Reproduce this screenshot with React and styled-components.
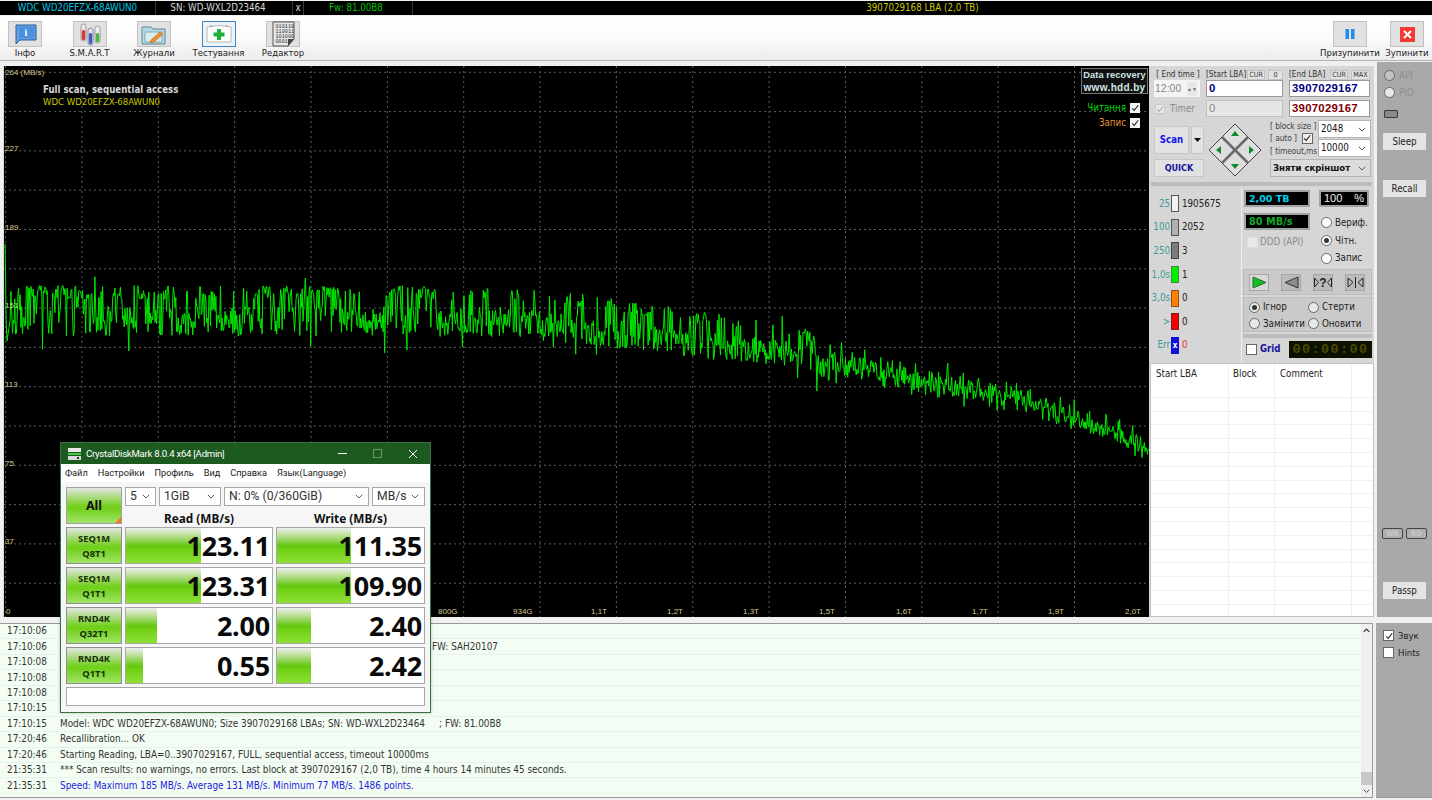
import React from 'react';
import styled, { createGlobalStyle } from 'styled-components';

const SANS = '"DejaVu Sans Condensed", "Liberation Sans", Arial, sans-serif';
const SEGOE = 'Roboto, "Open Sans", sans-serif';
const NOTO = '"Noto Sans", "Open Sans", sans-serif';

const Global = createGlobalStyle`
  html, body { margin: 0; padding: 0; background: #f0f0f0; }
  * { box-sizing: border-box; }
`;

/* ---------- chart data ---------- */
function mulberry(a) {
  return () => {
    a |= 0; a = (a + 0x6d2b79f5) | 0;
    let t = Math.imul(a ^ (a >>> 15), 1 | a);
    t = (t + Math.imul(t ^ (t >>> 7), 61 | t)) ^ t;
    return ((t ^ (t >>> 14)) >>> 0) / 4294967296;
  };
}
const lerp = (pts, x) => {
  for (let i = 1; i < pts.length; i++) {
    if (x <= pts[i][0]) {
      const [x0, y0] = pts[i - 1];
      const [x1, y1] = pts[i];
      return y0 + ((y1 - y0) * (x - x0)) / (x1 - x0);
    }
  }
  return pts[pts.length - 1][1];
};
const CENTER = [[0, 311], [500, 312], [600, 322], [700, 337], [800, 347], [825, 364], [900, 375], [1000, 396], [1100, 428], [1148, 452]];
const AMP = [[0, 26], [560, 26], [700, 25], [815, 20], [840, 15], [1148, 11]];

function buildCurve() {
  const r = mulberry(20107);
  const pts = ['1,178', '1.5,205', '2,250', '3,275', '4,268', '5,262'];
  let p = 0.3;
  let left = 0;
  for (let i = 8; i < 1486; i++) {
    const x = i * 0.7705;
    const c = lerp(CENTER, x);
    const a = lerp(AMP, x);
    if (left-- <= 0) { p = r() < 0.4 ? 0.55 + r() * 0.2 : 0.06 + r() * 0.2; left = 5 + Math.floor(r() * 20); }
    let y;
    if (x < 820) {
      y = r() < p ? c - a * (0.45 + 0.55 * r()) : c + a * (r() * 1.15 - 0.2);
      if (r() < 0.004) y = c - a - 3 - r() * 7;
      if (r() < 0.006) y = c + a + 4 + r() * 12;
    } else {
      y = c + a * (r() + r() - 1) * 1.25;
      if (r() < 0.03) y = c - a - r() * 8;
      if (r() < 0.02) y = c + a + r() * 6;
    }
    pts.push(`${x.toFixed(2)},${(y - 66).toFixed(1)}`);
  }
  return pts.join(' ');
}
const CURVE = buildCurve();

const H_LINES = Array.from({ length: 14 }, (_, i) => 6.3 + i * 39.3);
const V_LINES = Array.from({ length: 15 }, (_, i) => 1.6 + i * 76.35);
const Y_LABELS = [['227', 84], ['189', 163], ['151', 241], ['113', 320], ['75', 399], ['37', 477]];
const X_LABELS = [['0', 2], ['800G', 434], ['934G', 509], ['1,1T', 587], ['1,2T', 663], ['1,3T', 739], ['1,5T', 815], ['1,6T', 892], ['1,7T', 968], ['1,9T', 1044], ['2,0T', 1121]];

/* ---------- page ---------- */
const Root = styled.div`
  position: relative; width: 1432px; height: 800px; overflow: hidden;
  display: flex; flex-direction: column; background: #f0f0f0;
  font: 9.7px ${SANS}; color: #222;
`;
const TopBar = styled.div`
  margin-top: 1px; height: 14px; background: #000; display: flex; flex: none;
  font: 9.7px/14px ${SANS};
`;
const TopCell = styled.div`
  width: ${p => p.$w ? `${p.$w}px` : 'auto'}; flex: ${p => p.$w ? 'none' : 1};
  padding-right: ${p => p.$pr || 0}px;
  color: ${p => p.$c}; text-align: center; white-space: nowrap;
  border-right: ${p => p.$w ? '1px solid #3c3c3c' : 'none'};
`;
const Toolbar = styled.div`
  margin-top: 1px; height: 45px; flex: none; display: flex; justify-content: space-between;
  padding: 5px 8px 0 8px; background: linear-gradient(#fff, #fbfbfb 50%, #ececec);
  border-bottom: 1px solid #b4b4b4;
`;
const ToolGroup = styled.div`display: flex; gap: ${p => p.$gap}px;`;
const ToolItem = styled.div`
  width: 34px; display: flex; flex-direction: column; align-items: center;
`;
const ToolBtn = styled.div`
  width: 34px; height: 26px; display: flex; align-items: center; justify-content: center;
  background: ${p => p.$active ? '#eef3f8' : '#e1e1e1'};
  border: 1px solid ${p => p.$active ? '#3f86c4' : '#c2c2c2'};
`;
const ToolLabel = styled.div`
  margin-top: -1px; font: 9.5px/13px ${SANS}; white-space: nowrap; color: #222;
`;

const Main = styled.div`
  height: 556px; flex: none; margin-top: 1px; display: flex; padding-left: 3px;
`;
const Chart = styled.div`
  position: relative; width: 1146px; height: 551px; margin-top: 4px; background: #000;
  border-left: 1px solid #d8d8d8; flex: none;
`;
const ChartSvg = styled.svg`display: block;`;
const ChartTitle = styled.div`
  position: absolute; left: 39px; top: 17px; color: #d8d8d8; font: bold 9.6px/13px ${SANS};
  white-space: nowrap;
`;
const ChartSub = styled.div`
  position: absolute; left: 39px; top: 30px; color: #c8c800; font: 9.5px/12px ${SANS};
  white-space: nowrap;
`;
const Brand = styled.div`
  position: absolute; right: 1px; top: 2px; width: 67px; height: 26px; background: #111;
  border: 1px solid #777; color: #cfe6e6; font: bold 9.2px/11.5px "Liberation Sans", sans-serif;
  letter-spacing: .15px; text-align: center; padding-top: 1px; white-space: nowrap;
`;
const BrandUrl = styled.div`font-size: 10px; letter-spacing: .35px;`;
const Legend = styled.div`
  position: absolute; right: 9px; top: ${p => p.$top}px; display: flex; align-items: center; gap: 4px;
  color: ${p => p.$c}; font: 9.7px/12px ${SANS};
`;
const LegendBox = styled.span`
  width: 10px; height: 10px; background: #f4f4f4; display: flex; align-items: center; justify-content: center;
`;

const RightPanel = styled.div`
  width: 225px; height: 551px; margin-top: 4px; flex: none; display: flex; flex-direction: column;
  background: #d6d6d6;
`;
const TopSection = styled.div`
  height: 116px; flex: none; padding: 3px 3px 0 5px; color: #333;
`;
const HeadRow = styled.div`
  display: grid; grid-template-columns: 46px 77px 81px; column-gap: 6px;
`;
const FieldGrid = styled(HeadRow)`row-gap: 3px; grid-auto-rows: 17px;`;
const HeadCell = styled.div`
  height: 11px; display: flex; align-items: center; justify-content: space-between;
  white-space: nowrap; font: 8.2px/11px ${SANS}; color: #333;
`;
const TinyBtn = styled.span`
  height: 10px; min-width: ${p => p.$w}px; padding: 0 1px; display: inline-flex; align-items: center; justify-content: center;
  background: #e3e3e3; border: 1px solid #c4c4c4; font: 7.2px/8px ${SANS}; color: #333;
`;
const HeadBtns = styled.span`display: inline-flex; gap: 3px;`;
const LbaField = styled.div`
  height: 17px; padding-left: 2px; border: 1px solid ${p => p.$off ? '#c0c0c0' : '#9a9a9a'};
  background: ${p => p.$off ? '#e6e6e6' : '#fff'};
  color: ${p => p.$c}; font: ${p => p.$off ? 'normal' : 'bold'} 11.4px/15px "Liberation Sans", sans-serif;
  letter-spacing: .25px;
`;
const TimeField = styled.div`
  height: 17px; background: #f4f4f4; display: flex; align-items: center; justify-content: space-between;
  padding: 0 3px 0 1px; color: #888; font: 10.5px/15px "Liberation Sans", sans-serif;
`;
const Spin = styled.span`
  width: 10px; height: 14px; background: #e8e8e8; display: flex; flex-direction: column; align-items: center;
  justify-content: center; color: #666; font-size: 5px; line-height: 6px;
`;
const TimerCell = styled.div`
  height: 17px; display: flex; align-items: center; gap: 5px; padding-left: 1px; color: #8a8a8a; font: 9.7px/12px ${SANS};
`;
const LowerRow = styled.div`display: flex; margin-top: 3px;`;
const ScanCol = styled.div`width: 50px; flex: none; display: flex; flex-direction: column; gap: 5px; margin-top: 6px;`;
const ScanRow = styled.div`display: flex; gap: 2px; height: 28px;`;
const ScanBtn = styled.div`
  flex: 1; background: #e2e2e2; border: 1px solid #c6c6c6; color: #1414f0;
  font: bold 9.6px/26px ${SANS}; text-align: center;
`;
const ScanDrop = styled.div`
  width: 13px; flex: none; background: #e2e2e2; border: 1px solid #c6c6c6; display: flex; align-items: center; justify-content: center;
`;
const QuickBtn = styled.div`
  height: 18px; background: #e2e2e2; border: 1px solid #c6c6c6; color: #14149c;
  font: bold 9px/16px ${SANS}; text-align: center;
`;
const Pad = styled.div`width: 54px; flex: none; margin: 3px 0 0 4px;`;
const ScanOptions = styled.div`
  flex: none; width: 101px; margin-left: 8px; display: grid; grid-template-columns: 48px 53px; grid-template-rows: 18px 18px 18px; row-gap: 1px;
`;
const OptLabels = styled.div`
  grid-row: 1 / span 2; display: flex; flex-direction: column; font: 8.4px/10px ${SANS}; color: #444; white-space: nowrap; letter-spacing: -.1px;
`;
const OptLabel = styled.div`display: flex; align-items: center; gap: 5px; height: ${p => p.$h}px;`;
const MiniCombo = styled.div`
  grid-column: ${p => p.$col || 2}; grid-row: ${p => p.$row}; height: 18px; margin-top: ${p => p.$mt || 0}px; background: ${p => p.$bg || '#fff'}; border: 1px solid #b4b4b4;
  display: flex; align-items: center; justify-content: space-between; padding: 0 4px 0 2px;
  font: ${p => p.$bold ? 'bold' : 'normal'} ${p => p.$fs || 9.7}px/16px ${SANS}; color: #111; white-space: nowrap;
`;

const Divider = styled.div`height: 4px; flex: none; margin: 0 2px 1px; background: #bcbcbc;`;
const MidSection = styled.div`height: 175px; flex: none; display: flex;`;
const Stats = styled.div`
  width: 93px; flex: none; padding-top: 5px; border-right: 1px solid #ececec; display: flex; flex-direction: column;
`;
const StatRow = styled.div`height: 23.6px; display: flex; align-items: center;`;
const StatLabel = styled.div`
  width: 21px; text-align: right; color: ${p => p.$c || '#3f9a9a'}; font: 9.7px/12px ${SANS}; white-space: nowrap; flex: none;
`;
const Swatch = styled.div`
  width: 8px; height: 17px; margin-left: 1px; flex: none; background: ${p => p.$c}; border: 1px solid ${p => p.$b};
  color: #fff; font: bold 8px/15px ${SANS}; text-align: center;
`;
const StatVal = styled.div`
  margin-left: 3px; font: 9.7px/12px ${SANS}; color: ${p => p.$c || '#222'};
`;
const Controls = styled.div`flex: 1; display: flex; flex-direction: column; padding: 0 2px 0 1px;`;
const ReadoutArea = styled.div`
  height: 81px; flex: none; display: grid; grid-template-columns: 75px 1fr; padding: 3px 0 0 1px;
`;
const ReadoutCol = styled.div`display: flex; flex-direction: column; gap: 6px;`;
const Lcd = styled.div`
  width: ${p => p.$w}px; height: 17px; background: #000; border: 2px solid #a2a2a2; color: ${p => p.$c};
  font: bold ${p => p.$fs || 9.5}px/13px "DejaVu Sans", sans-serif; padding-left: 3px; white-space: nowrap;
`;
const PctLcd = styled(Lcd)`
  display: flex; justify-content: space-between; padding: 0 3px; font: 11px/13px "Liberation Sans", sans-serif;
`;
const DddRow = styled.div`
  display: flex; align-items: center; gap: 2px; padding-left: 3px; color: #8a8a8a; font: 9.7px/12px ${SANS};
`;
const ModeCol = styled.div`display: flex; flex-direction: column;`;
const RadioRow = styled.div`
  display: flex; align-items: center; gap: ${p => p.$g || 3}px; height: ${p => p.$h || 17.7}px; padding-left: ${p => p.$pl || 0}px;
  font: 9.7px/12px ${SANS}; color: #222; white-space: nowrap;
`;
const RadioMark = styled.span`
  width: 11px; height: 11px; border-radius: 50%; background: ${p => p.$bg || '#fff'}; border: 1px solid #666; flex: none;
  display: flex; align-items: center; justify-content: center;
  &::after { content: ''; width: 5px; height: 5px; border-radius: 50%; background: ${p => p.$on ? '#333' : 'transparent'}; }
`;
const ModeSpacer = styled.div`height: 7px; flex: none;`;
const Tick = styled.span`
  width: ${p => p.$s || 10}px; height: ${p => p.$s || 10}px; flex: none; background: ${p => p.$bg || '#fff'};
  border: 1px solid ${p => p.$b || '#666'}; display: flex; align-items: center; justify-content: center;
`;
const PlayBox = styled.div`
  height: 26px; flex: none; margin-top: 1px; background: #cacaca; border: 1px solid #bcbcbc;
  display: flex; align-items: center; justify-content: space-between; padding: 0 6px 0 5px;
`;
const PlayBtn = styled.div`
  width: 20px; height: 17px; background: ${p => p.$on ? '#d8d8d8' : '#bcbcbc'}; border: 1px solid #a6a6a6;
  display: flex; align-items: center; justify-content: center;
`;
const ErrBox = styled.div`
  height: 35px; flex: none; margin-top: 2px; padding: 1px 0 0 5px; background: #cacaca; border: 1px solid #bcbcbc;
  display: grid; grid-template-columns: 59px 1fr;
`;
const Strip = styled.div`height: 4px; flex: none; margin-top: 2px; background: #bcbcbc;`;
const GridRow = styled.div`display: flex; align-items: center; height: 22px; padding-left: 3px;`;
const GridLabel = styled.span`margin-left: 3px; color: #14149c; font: bold 9.6px/12px ${SANS};`;
const TimerLcd = styled.div`
  margin-left: auto; width: 83px; height: 17px; background: #0d1200; color: #4a4a00;
  font: bold 13.5px/17px "Liberation Mono", monospace; letter-spacing: 1.4px; text-align: center;
`;

const TableBox = styled.div`
  margin: 1px 0 0 1px; width: 224px; flex: 1; background: #fff; border: 1px solid #c2c2c2; overflow: hidden;
`;
const TableHead = styled.div`display: flex; height: 20px; align-items: center; color: #222; font: 9.7px/12px ${SANS};`;
const TableRow = styled.div`display: flex; height: 13.8px; border-bottom: 1px solid #f0f0f0;`;
const TCol = styled.div`
  width: ${p => p.$w}px; height: 100%; padding-left: ${p => p.$pl || 0}px; flex: none; border-right: 1px solid #f0f0f0; white-space: nowrap;
  display: flex; align-items: center;
`;

const FarPanel = styled.div`
  width: 56px; height: 555px; margin-left: 3px; flex: none; background: #a9a9a9; display: flex; flex-direction: column;
  padding-top: 5px; align-items: flex-start;
`;
const FarRadio = styled.div`
  display: flex; align-items: center; gap: 4px; height: 17px; padding-left: 7px; color: #8e8e8e; font: 9.7px/12px ${SANS};
`;
const Led = styled.div`
  width: 14px; height: 8px; margin: 9px 0 0 7px; background: #8a8a8a; border: 1px solid #3a3a3a; border-radius: 1px;
`;
const FarBtn = styled.div`
  width: 43px; height: 17px; margin: ${p => p.$mt}px 0 0 6px; background: #e4e4e4; text-align: center;
  font: 9.7px/17px ${SANS}; color: #222;
`;
const WrRow = styled.div`display: flex; gap: 3px; margin: 331px 0 0 5px;`;
const WrBtn = styled.div`
  width: 21px; height: 11px; border: 1px solid #444; border-radius: 2px; background: #b0b0b0; color: #c8c8c8; text-align: center;
  font: bold 7.5px/9px ${SANS};
`;

const Bottom = styled.div`height: 175px; margin-top: 5px; flex: none; display: flex;`;
const LogBox = styled.div`
  width: 1373px; flex: none; position: relative; display: flex; border-top: 1px solid #9a9a9a; border-bottom: 1px solid #9a9a9a; border-right: 1px solid #9a9a9a;
  background: #f3fdf3;
`;
const LogList = styled.div`flex: 1; display: flex; flex-direction: column;`;
const LogRow = styled.div`
  height: 15.45px; flex: none; display: flex; align-items: center; white-space: pre; border-bottom: 1px solid #e8f3e8;
  color: ${p => p.$c || '#333'}; font: 9.9px/14px ${SANS};
`;
const LogTime = styled.span`width: 60px; flex: none; padding-left: 7px; color: #333; font-size: 9.9px;`;
const LogGap = styled.span`display: inline-block; width: ${p => p.$w}px;`;
const ScrollBar = styled.div`
  width: 11px; flex: none; background: #efefef; display: flex; flex-direction: column; align-items: center; justify-content: space-between;
`;
const Thumb = styled.div`width: 11px; height: 13px; background: #c8c8c8; margin-top: auto;`;
const ArrowBox = styled.div`height: 12px; display: flex; align-items: center; justify-content: center;`;
const FarBottom = styled.div`
  width: 56px; margin-left: 3px; flex: none; background: #a9a9a9; padding: 7px 0 0 7px; display: flex; flex-direction: column; gap: 6px;
  border-bottom: 1px solid #9a9a9a;
`;
const FarCheck = styled.div`display: flex; align-items: center; gap: 4px; height: 11px; font: 9.5px/12px ${SANS}; color: #222;`;

/* ---------- CrystalDiskMark ---------- */
const Cdm = styled.div`
  position: absolute; left: 60px; top: 442px; width: 371px; height: 271px; border: 1px solid #3c7040;
  background: #f6f6f6; display: flex; flex-direction: column; box-shadow: 0 0 3px rgba(0,0,0,.25);
  font-family: ${SEGOE};
`;
const CdmTitle = styled.div`
  height: 21px; flex: none; background: #1d5a20; color: #fff; display: flex; align-items: center; padding-left: 6px;
  font: 9.6px/20px ${SEGOE}; letter-spacing: -.25px;
`;
const CdmCaption = styled.span`margin-left: 4px; white-space: nowrap;`;
const WinBtns = styled.div`margin-left: auto; display: flex; align-items: center;`;
const WinBtn = styled.span`
  width: 35px; height: 20px; display: flex; align-items: center; justify-content: center; opacity: ${p => p.$dim ? .35 : 1};
`;
const CdmMenu = styled.div`
  height: 18px; flex: none; background: #fff; display: flex; gap: 10px; padding-left: 4px; align-items: center;
  font: 9.2px/18px ${SEGOE}; color: #222; white-space: nowrap;
`;
const CdmBody = styled.div`
  flex: 1; padding: 5px 0 0 5px; display: grid; grid-template-columns: 56px 148px 149px; gap: 3px; grid-auto-rows: 37px; align-content: start;
`;
const greenGrad = 'linear-gradient(#e4e6e2 0%, #c5e0ad 14%, #74d01e 52%, #72d01c 60%, #a2e468 100%)';
const AllBtn = styled.div`
  position: relative; border: 1px solid #a2a2a2; background: ${greenGrad};
  font: bold 12.5px/35px ${NOTO}; text-align: center; color: #111;
  &::after { content: ''; position: absolute; right: 0; bottom: 0; border-style: solid; border-width: 0 0 6px 6px; border-color: transparent transparent #f07818 transparent; }
`;
const CdmHead = styled.div`grid-column: 2 / span 2; display: flex; flex-direction: column;`;
const SelectRow = styled.div`display: flex; gap: 3px; height: 19px;`;
const Select = styled.div`
  width: ${p => p.$w}px; flex: none; background: #fff; border: 1px solid #a6a6a6; display: flex; align-items: center; justify-content: space-between;
  padding: 0 5px 0 4px; font: 12.2px/17px ${SEGOE}; color: #333; white-space: nowrap;
`;
const HeadTitles = styled.div`display: grid; grid-template-columns: 148px 149px; column-gap: 3px;`;
const HeadTitle = styled.div`text-align: center; font: bold 11.8px/24px ${NOTO}; color: #111; white-space: nowrap;`;
const TestBtn = styled.div`
  border: 1px solid #909090; background: ${greenGrad}; display: flex; flex-direction: column; align-items: center; justify-content: center;
  font: bold 9.4px/15px ${NOTO}; color: #16300a;
`;
const Cell = styled.div`
  position: relative; background: #fff; border: 1px solid #a6a6a6; text-align: right; padding-right: 2px;
  font: bold 27px/35px ${NOTO}; color: #0a0a0a; letter-spacing: -.2px; overflow: hidden;
`;
const CellBar = styled.div`
  position: absolute; left: 0; top: 0; bottom: 0;
  background: linear-gradient(#ececec 0%, #c4e2a4 18%, #62c80e 52%, #70d016 62%, #8fe036 100%);
`;
const CellVal = styled.span`position: relative;`;
const StatusBar = styled.div`grid-column: 1 / span 3; height: 19px; background: #fff; border: 1px solid #a6a6a6;`;

/* ---------- icons ---------- */
const Chevron = ({ s = 9, c = '#555' }) => (
  <svg width={s} height={s * 0.6} viewBox="0 0 10 6"><path d="M1 1l4 4 4-4" fill="none" stroke={c} strokeWidth="1.2" /></svg>
);
const Check = ({ s = 8, c = '#222' }) => (
  <svg width={s} height={s} viewBox="0 0 10 10"><path d="M1.5 5.5l2.5 2.5 5-6.5" fill="none" stroke={c} strokeWidth="1.3" /></svg>
);
const InfoIcon = () => (
  <svg width="26" height="22" viewBox="0 0 26 22">
    <path d="M4 2h20v15H8l-4 4z" fill="#5f9ee0" stroke="#2f5f9f" />
    <rect x="7" y="4" width="15" height="11" fill="#4a8fe0" />
    <text x="14" y="13" textAnchor="middle" fill="#fff" fontSize="10" fontWeight="bold" fontFamily="Liberation Serif">i</text>
  </svg>
);
const SmartIcon = () => (
  <svg width="24" height="23" viewBox="0 0 24 23">
    <rect x="3" y="1" width="5" height="17" rx="2.500" fill="#f2e4e4" stroke="#9c9c9c" />
    <rect x="3.800" y="7" width="3.400" height="10" rx="1.500" fill="#d83a3a" />
    <rect x="10" y="5" width="5" height="17" rx="2.500" fill="#e4e8f4" stroke="#8c8c9c" />
    <rect x="10.800" y="10" width="3.400" height="11" rx="1.500" fill="#4060c0" />
    <rect x="17" y="3" width="5" height="17" rx="2.500" fill="#e6f2e6" stroke="#9c9c9c" />
    <rect x="17.800" y="10" width="3.400" height="9" rx="1.500" fill="#48b848" />
  </svg>
);
const FolderIcon = () => (
  <svg width="28" height="23" viewBox="0 0 28 23">
    <path d="M2 4h9l2 2h12v15H2z" fill="#b4dce6" stroke="#5c8890" />
    <rect x="5" y="9" width="17" height="10" fill="#d8eef2" stroke="#84aab2" />
    <path d="M11 17l9-8 3 2-9 8-4 1z" fill="#f09030" stroke="#b06818" strokeWidth=".6" />
  </svg>
);
const TestIcon = () => (
  <svg width="28" height="20" viewBox="0 0 28 20">
    <path d="M2 3q12-3 24 0v15H2z" fill="#fff" stroke="#b8b8b8" />
    <path d="M5 3l2-2M23 3l-2-2" stroke="#999" />
    <path d="M12 5h4v3.500h3.500v4H16V16h-4v-3.500H8.500v-4H12z" fill="#22b03c" />
  </svg>
);
const EditorIcon = () => (
  <svg width="31" height="26" viewBox="0 0 31 26">
    <path d="M5 1h21v17l-6 7H5z" fill="#e8e8e8" stroke="#555" />
    <path d="M20 25v-7h6z" fill="#444" />
    <text x="7.500" y="6.500" fontSize="5.200" fontFamily="Liberation Mono" fill="#333">010110</text>
    <text x="7.500" y="11.500" fontSize="5.200" fontFamily="Liberation Mono" fill="#333">110011</text>
    <text x="7.500" y="16.500" fontSize="5.200" fontFamily="Liberation Mono" fill="#333">101000</text>
    <text x="7.500" y="21.500" fontSize="5.200" fontFamily="Liberation Mono" fill="#333">0001</text>
  </svg>
);
const PauseIcon = () => (
  <svg width="14" height="14" viewBox="0 0 14 14"><rect x="2.500" y="2" width="3.500" height="10" fill="#1c8cf0" /><rect x="8" y="2" width="3.500" height="10" fill="#1c8cf0" /></svg>
);
const StopIcon = () => (
  <svg width="15" height="15" viewBox="0 0 15 15"><rect width="15" height="15" fill="#f23a32" /><path d="M4 4l7 7M11 4l-7 7" stroke="#fff" strokeWidth="2" /></svg>
);
const DiamondPad = () => (
  <svg width="54" height="54" viewBox="0 0 54 54">
    <path d="M27 1l26 26-26 26L1 27z" fill="#dedede" stroke="#444" strokeWidth="1" />
    <path d="M14 14l26 26M40 14L14 40" stroke="#6a6a6a" strokeWidth="2.500" />
    <path d="M27 8l-4 5h8zM27 46l-4-5h8zM8 27l5-4v8zM46 27l-5-4v8z" fill="#0c8a2c" />
  </svg>
);
const PlayIcon = () => <svg width="15" height="13" viewBox="0 0 15 13"><path d="M1 1l13 5.500L1 12z" fill="#10c020" stroke="#2a6a2a" /></svg>;
const BackIcon = () => <svg width="15" height="13" viewBox="0 0 15 13"><path d="M14 1L1 6.500 14 12z" fill="#8c8c8c" stroke="#333" /></svg>;
const QueryIcon = () => (
  <svg width="18" height="13" viewBox="0 0 18 13">
    <path d="M.5 2l4 4.500-4 4.500zM17.500 2l-4 4.500 4 4.500z" fill="none" stroke="#222" />
    <text x="9" y="11" textAnchor="middle" fontSize="12" fontWeight="bold" fontFamily="Liberation Sans" fill="#222">?</text>
  </svg>
);
const SplitIcon = () => (
  <svg width="17" height="13" viewBox="0 0 17 13">
    <path d="M1 2l5 4.500-5 4.500zM16 2l-5 4.500 5 4.500z" fill="none" stroke="#222" /><path d="M8.500 1v11" stroke="#222" />
  </svg>
);
const CdmIcon = () => (
  <svg width="15" height="14" viewBox="0 0 15 14">
    <rect x="1" y="1" width="13" height="4" fill="#e8e8e8" />
    <path d="M1 6h13v2H1z" fill="#46c846" />
    <rect x="1" y="9" width="13" height="4" fill="#d8d8d8" /><rect x="10" y="10" width="2" height="2" fill="#333" />
  </svg>
);

/* ---------- data ---------- */
const TOOLS = [
  ['Інфо', <InfoIcon key="i" />], ['S.M.A.R.T', <SmartIcon key="s" />], ['Журнали', <FolderIcon key="f" />],
  ['Тестування', <TestIcon key="t" />, true], ['Редактор', <EditorIcon key="e" />],
];
const STATS = [
  ['25', '#f2f2f2', '#555', '1905675'], ['100', '#b0b0b0', '#555', '2052'], ['250', '#7c7c7c', '#444', '3'],
  ['1,0s', '#00f000', '#448844', '1'], ['3,0s', '#ff8000', '#885522', '0'], ['>', '#f00000', '#772222', '0'],
];
const LOG = [
  ['17:10:06'], ['17:10:06', null, 'FW: SAH20107'], ['17:10:08'], ['17:10:08'], ['17:10:08'], ['17:10:15'],
  ['17:10:15', 'Model: WDC WD20EFZX-68AWUN0; Size 3907029168 LBAs; SN: WD-WXL2D23464     ; FW: 81.00B8'],
  ['17:20:46', 'Recallibration... OK'],
  ['17:20:46', 'Starting Reading, LBA=0..3907029167, FULL, sequential access, timeout 10000ms'],
  ['21:35:31', '*** Scan results: no warnings, no errors. Last block at 3907029167 (2,0 TB), time 4 hours 14 minutes 45 seconds.'],
  ['21:35:31', 'Speed: Maximum 185 MB/s. Average 131 MB/s. Minimum 77 MB/s. 1486 points.', null, '#2222e0'],
];
const TESTS = [
  ['SEQ1M', 'Q8T1', '123.11', 75, '111.35', 74],
  ['SEQ1M', 'Q1T1', '123.31', 75, '109.90', 74],
  ['RND4K', 'Q32T1', '2.00', 31, '2.40', 34],
  ['RND4K', 'Q1T1', '0.55', 17, '2.42', 34],
];
const T_COLS = [78, 46, 77];

export default function App() {
  return (
    <Root>
      <Global />
      <TopBar>
        <TopCell $w={156} $c="#00c8e0">WDC WD20EFZX-68AWUN0</TopCell>
        <TopCell $w={137} $pr={12} $c="#d8d8d8">SN: WD-WXL2D23464</TopCell>
        <TopCell $w={11} $c="#d8d8d8">x</TopCell>
        <TopCell $w={109} $pr={4} $c="#00c000">Fw: 81.00B8</TopCell>
        <TopCell $c="#c8c800">3907029168 LBA (2,0 TB)</TopCell>
      </TopBar>

      <Toolbar>
        <ToolGroup $gap={30.5}>
          {TOOLS.map(([label, icon, active]) => (
            <ToolItem key={label}>
              <ToolBtn $active={active}>{icon}</ToolBtn>
              <ToolLabel>{label}</ToolLabel>
            </ToolItem>
          ))}
        </ToolGroup>
        <ToolGroup $gap={23}>
          <ToolItem><ToolBtn><PauseIcon /></ToolBtn><ToolLabel>Призупинити</ToolLabel></ToolItem>
          <ToolItem><ToolBtn><StopIcon /></ToolBtn><ToolLabel>Зупинити</ToolLabel></ToolItem>
        </ToolGroup>
      </Toolbar>

      <Main>
        <Chart>
          <ChartSvg width="1145" height="551" viewBox="0 0 1145 551">
            {H_LINES.map(y => <line key={y} x1="0" x2="1145" y1={y} y2={y} stroke="#5c5c5c" strokeDasharray="2 3" />)}
            {V_LINES.map(x => <line key={x} x1={x} x2={x} y1="0" y2="551" stroke="#5c5c5c" strokeDasharray="2 3" />)}
            <polyline points={CURVE} fill="none" stroke="#00e800" strokeWidth="1" />
            <text x="1" y="8.500" fontSize="8" fontFamily="Liberation Sans" fill="#d8c890">264 (MB/s)</text>
            {Y_LABELS.map(([t, y]) => <text key={t} x="1" y={y + 1} fontSize="8" fontFamily="Liberation Sans" fill="#d8c890">{t}</text>)}
            {X_LABELS.map(([t, x]) => <text key={t} x={x} y="548" fontSize="8" fontFamily="Liberation Sans" fill="#d8c890">{t}</text>)}
          </ChartSvg>
          <ChartTitle>Full scan, sequential access</ChartTitle>
          <ChartSub>WDC WD20EFZX-68AWUN0</ChartSub>
          <Brand>Data recovery<BrandUrl>www.hdd.by</BrandUrl></Brand>
          <Legend $top={36} $c="#00d800">Читання<LegendBox><Check /></LegendBox></Legend>
          <Legend $top={51} $c="#e89038">Запис<LegendBox><Check /></LegendBox></Legend>
        </Chart>

        <RightPanel>
          <TopSection>
            <HeadRow>
              <HeadCell>&nbsp;[ End time ]</HeadCell>
              <HeadCell>[Start LBA]<HeadBtns><TinyBtn $w={15}>CUR</TinyBtn><TinyBtn $w={15}>0</TinyBtn></HeadBtns></HeadCell>
              <HeadCell>[End LBA]<HeadBtns><TinyBtn $w={14}>CUR</TinyBtn><TinyBtn $w={19}>MAX</TinyBtn></HeadBtns></HeadCell>
            </HeadRow>
            <FieldGrid>
              <TimeField>12:00<Spin>▲▼</Spin></TimeField>
              <LbaField $c="#000080">0</LbaField>
              <LbaField $c="#000080">3907029167</LbaField>
              <TimerCell><Tick $bg="#e8e8e8" $b="#cccccc"><Check c="#aaa" /></Tick>Timer</TimerCell>
              <LbaField $off $c="#888">0</LbaField>
              <LbaField $c="#800000">3907029167</LbaField>
            </FieldGrid>
            <LowerRow>
              <ScanCol>
                <ScanRow>
                  <ScanBtn>Scan</ScanBtn>
                  <ScanDrop><svg width="7" height="4" viewBox="0 0 7 4"><path d="M0 0h7L3.500 4z" fill="#111" /></svg></ScanDrop>
                </ScanRow>
                <QuickBtn>QUICK</QuickBtn>
              </ScanCol>
              <Pad><DiamondPad /></Pad>
              <ScanOptions>
                <OptLabels>
                  <OptLabel $h={11}>[ block size ]</OptLabel>
                  <OptLabel $h={14}>[ auto ]<Tick $s={11} $bg="#efefef"><Check /></Tick></OptLabel>
                  <OptLabel $h={11}>[ timeout,ms ]</OptLabel>
                </OptLabels>
                <MiniCombo $row={1}><span>2048</span><Chevron s={8} /></MiniCombo>
                <MiniCombo $row={2}><span>10000</span><Chevron s={8} /></MiniCombo>
                <MiniCombo $col="1 / span 2" $row={3} $mt={1} $bold $fs={9.5} $bg="#dcdcdc"><span>Зняти скріншот</span><Chevron s={8} /></MiniCombo>
              </ScanOptions>
            </LowerRow>
          </TopSection>
          <Divider />
          <MidSection>
            <Stats>
              {STATS.map(([l, c, b, v]) => (
                <StatRow key={l}><StatLabel>{l}</StatLabel><Swatch $c={c} $b={b} /><StatVal>{v}</StatVal></StatRow>
              ))}
              <StatRow><StatLabel>Err</StatLabel><Swatch $c="#1010d8" $b="#1010d8">x</Swatch><StatVal $c="#f03030">0</StatVal></StatRow>
            </Stats>
            <Controls>
              <ReadoutArea>
                <ReadoutCol>
                  <Lcd $w={66} $c="#00d0f0">2,00 ТВ</Lcd>
                  <Lcd $w={66} $c="#14a828" $fs={9.8}>80 MB/s</Lcd>
                  <DddRow><Tick $s={11} $bg="#e8e8e8" $b="#dddddd" />DDD (API)</DddRow>
                </ReadoutCol>
                <ModeCol>
                  <PctLcd $w={50} $c="#f0f0f0"><span>100</span><span>%</span></PctLcd>
                  <ModeSpacer />
                  <RadioRow $pl={2}><RadioMark />Вериф.</RadioRow>
                  <RadioRow $pl={2}><RadioMark $on />Чітн.</RadioRow>
                  <RadioRow $pl={2}><RadioMark />Запис</RadioRow>
                </ModeCol>
              </ReadoutArea>
              <PlayBox>
                <PlayBtn $on><PlayIcon /></PlayBtn>
                <PlayBtn><BackIcon /></PlayBtn>
                <PlayBtn><QueryIcon /></PlayBtn>
                <PlayBtn><SplitIcon /></PlayBtn>
              </PlayBox>
              <ErrBox>
                <RadioRow $h={16.5}><RadioMark $on $bg="#e8e8e8" />Ігнор</RadioRow>
                <RadioRow $h={16.5}><RadioMark $bg="#e8e8e8" />Стерти</RadioRow>
                <RadioRow $h={16.5}><RadioMark $bg="#e8e8e8" />Замінити</RadioRow>
                <RadioRow $h={16.5}><RadioMark $bg="#e8e8e8" />Оновити</RadioRow>
              </ErrBox>
              <Strip />
              <GridRow>
                <Tick $s={11} />
                <GridLabel>Grid</GridLabel>
                <TimerLcd>00:00:00</TimerLcd>
              </GridRow>
            </Controls>
          </MidSection>
          <TableBox>
            <TableHead>
              <TCol $w={T_COLS[0]} $pl={5}>Start LBA</TCol>
              <TCol $w={T_COLS[1]} $pl={4}>Block</TCol>
              <TCol $w={T_COLS[2]} $pl={5}>Comment</TCol>
            </TableHead>
            {Array.from({ length: 17 }, (_, i) => (
              <TableRow key={i}>{T_COLS.map((w, j) => <TCol key={j} $w={w} />)}</TableRow>
            ))}
          </TableBox>
        </RightPanel>

        <FarPanel>
          <FarRadio><RadioMark $bg="#c4c4c4" />API</FarRadio>
          <FarRadio><RadioMark $bg="#e8e8e8" />PIO</FarRadio>
          <Led />
          <FarBtn $mt={15}>Sleep</FarBtn>
          <FarBtn $mt={30}>Recall</FarBtn>
          <WrRow><WrBtn>WR</WrBtn><WrBtn>RD</WrBtn></WrRow>
          <FarBtn $mt={43}>Passp</FarBtn>
        </FarPanel>
      </Main>

      <Bottom>
        <LogBox>
          <LogList>
            {LOG.map(([t, msg, tail, c], i) => (
              <LogRow key={i} $c={c}>
                <LogTime>{t}</LogTime>
                {tail ? <><LogGap $w={372} />{tail}</> : msg}
              </LogRow>
            ))}
          </LogList>
          <ScrollBar>
            <ArrowBox><svg width="7" height="5" viewBox="0 0 10 6"><path d="M1 5l4-4 4 4" fill="none" stroke="#333" strokeWidth="1.600" /></svg></ArrowBox>
            <Thumb />
            <ArrowBox><Chevron s={7} c="#333" /></ArrowBox>
          </ScrollBar>
        </LogBox>
        <FarBottom>
          <FarCheck><Tick $s={11}><Check /></Tick>Звук</FarCheck>
          <FarCheck><Tick $s={11} />Hints</FarCheck>
        </FarBottom>
      </Bottom>

      <Cdm>
        <CdmTitle>
          <CdmIcon />
          <CdmCaption>CrystalDiskMark 8.0.4 x64 [Admin]</CdmCaption>
          <WinBtns>
            <WinBtn><svg width="9" height="2"><rect width="9" height="1" fill="#fff" /></svg></WinBtn>
            <WinBtn $dim><svg width="9" height="9"><rect x=".5" y=".5" width="8" height="8" fill="none" stroke="#fff" /></svg></WinBtn>
            <WinBtn><svg width="10" height="10"><path d="M1 1l8 8M9 1l-8 8" stroke="#fff" strokeWidth="1" /></svg></WinBtn>
          </WinBtns>
        </CdmTitle>
        <CdmMenu>
          <span>Файл</span><span>Настройки</span><span>Профиль</span><span>Вид</span><span>Справка</span><span>Язык(Language)</span>
        </CdmMenu>
        <CdmBody>
          <AllBtn>All</AllBtn>
          <CdmHead>
            <SelectRow>
              <Select $w={31}>5<Chevron s={8} /></Select>
              <Select $w={62}>1GiB<Chevron s={8} /></Select>
              <Select $w={145}>N: 0% (0/360GiB)<Chevron s={8} /></Select>
              <Select $w={53}>MB/s<Chevron s={8} /></Select>
            </SelectRow>
            <HeadTitles><HeadTitle>Read (MB/s)</HeadTitle><HeadTitle>Write (MB/s)</HeadTitle></HeadTitles>
          </CdmHead>
          {TESTS.map(([a, b, r, rw, w, ww]) => (
            <React.Fragment key={a + b}>
              <TestBtn><span>{a}</span><span>{b}</span></TestBtn>
              <Cell><CellBar style={{ width: rw }} /><CellVal>{r}</CellVal></Cell>
              <Cell><CellBar style={{ width: ww }} /><CellVal>{w}</CellVal></Cell>
            </React.Fragment>
          ))}
          <StatusBar />
        </CdmBody>
      </Cdm>
    </Root>
  );
}
